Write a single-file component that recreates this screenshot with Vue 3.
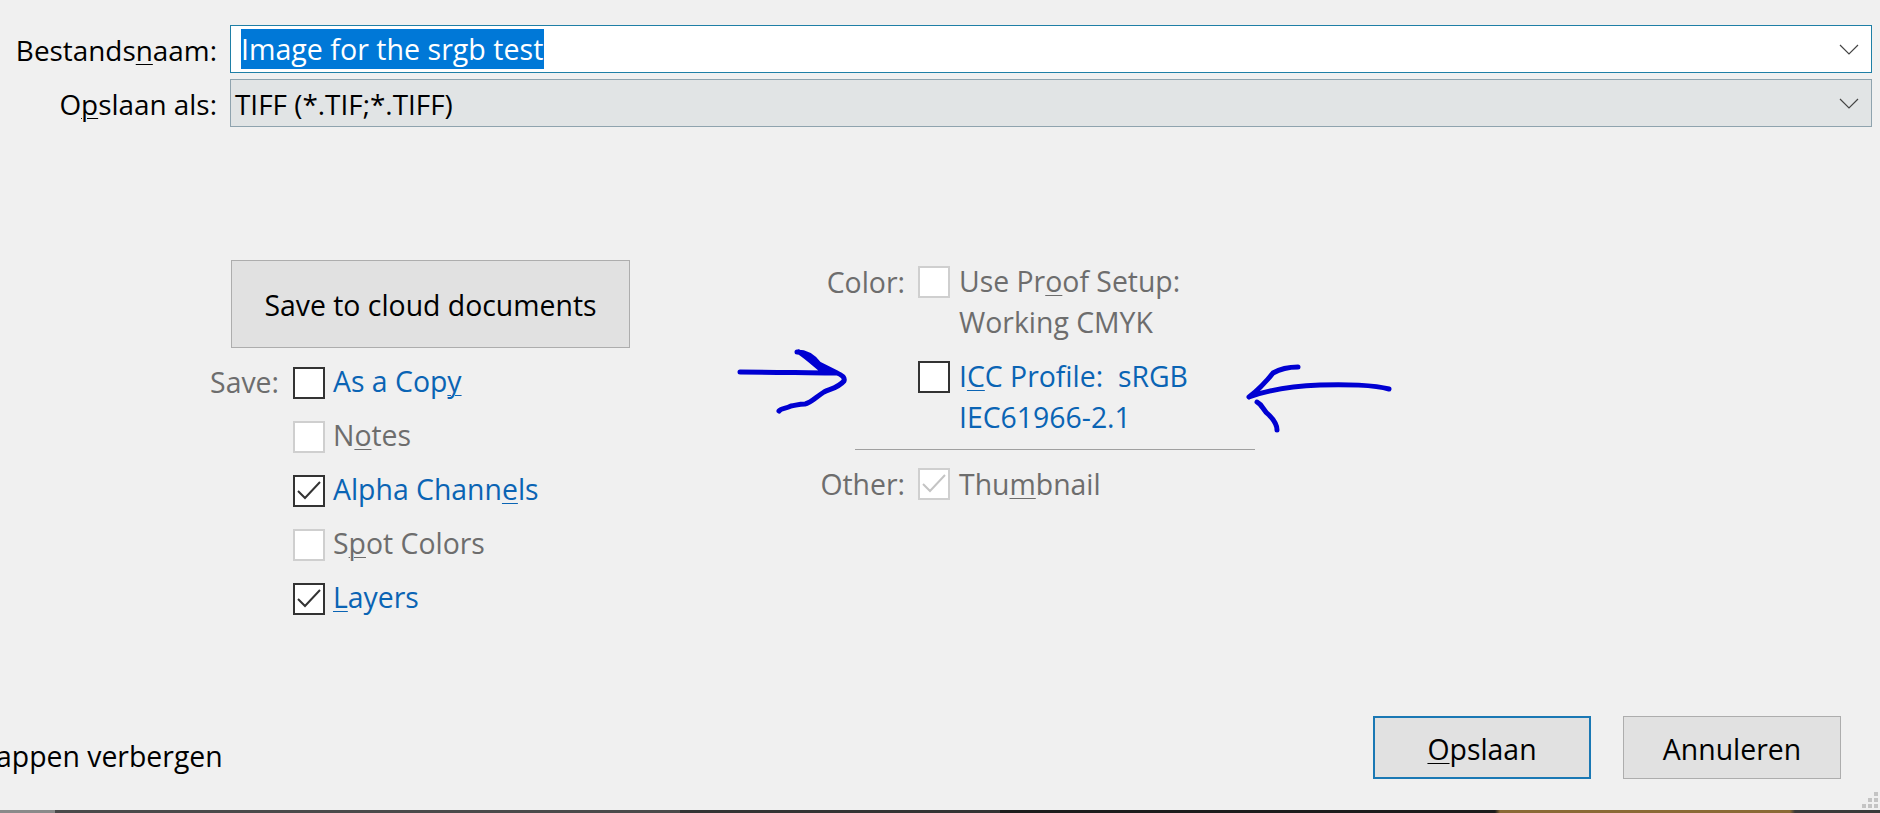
<script setup>
const leftOptions = [
  { before: 'As a Cop', key: 'y', after: '', on: true, checked: false },
  { before: 'N', key: 'o', after: 'tes', on: false, checked: false },
  { before: 'Alpha Chann', key: 'e', after: 'ls', on: true, checked: true },
  { before: 'S', key: 'p', after: 'ot Colors', on: false, checked: false },
  { before: '', key: 'L', after: 'ayers', on: true, checked: true }
]
</script>

<template>
  <div class="dialog">
    <section class="fields">
      <label class="field-label">Bestands<u>n</u>aam:</label>
      <div class="combo combo-edit">
        <span class="selection">Image for the srgb test</span>
        <svg class="chevron" viewBox="0 0 20 11"><path d="M1 1l9 9 9-9" /></svg>
      </div>
      <label class="field-label">O<u>p</u>slaan als:</label>
      <div class="combo combo-select">
        <span class="value">TIFF (*.TIF;*.TIFF)</span>
        <svg class="chevron" viewBox="0 0 20 11"><path d="M1 1l9 9 9-9" /></svg>
      </div>
    </section>

    <section class="options">
      <div class="save-col">
        <button class="btn cloud">Save to cloud documents</button>
        <div class="save-list">
          <div v-for="(o, i) in leftOptions" :key="i" class="opt">
            <span class="opt-label">{{ i === 0 ? 'Save:' : '' }}</span>
            <span class="box" :class="{ off: !o.on }">
              <svg v-if="o.checked" viewBox="0 0 28 28"><path d="M3 14l7 7L25 5" /></svg>
            </span>
            <span class="text" :class="{ link: o.on }">{{ o.before }}<u>{{ o.key }}</u>{{ o.after }}</span>
          </div>
        </div>
      </div>

      <div class="color-col">
        <div class="opt tall">
          <span class="opt-label">Color:</span>
          <span class="box off"></span>
          <span class="text">Use Pr<u>o</u>of Setup:<br />Working CMYK</span>
        </div>
        <div class="opt tall icc">
          <span class="opt-label"></span>
          <span class="box"></span>
          <span class="text link">I<u>C</u>C Profile:&nbsp; sRGB<br />IEC61966-2.1</span>
        </div>
        <hr class="rule" />
        <div class="opt other">
          <span class="opt-label">Other:</span>
          <span class="box off">
            <svg class="faint" viewBox="0 0 28 28"><path d="M3 14l7 7L25 5" /></svg>
          </span>
          <span class="text">Thu<u>m</u>bnail</span>
        </div>
      </div>
    </section>

    <footer class="footer">
      <span class="hide">appen verbergen</span>
      <div class="actions">
        <button class="btn action primary"><u>O</u>pslaan</button>
        <button class="btn action">Annuleren</button>
      </div>
    </footer>

    <div class="taskbar"></div>

    <svg class="grip" viewBox="0 0 18 16">
      <rect x="13" y="0" width="4" height="4" />
      <rect x="7" y="6" width="4" height="4" /><rect x="13" y="6" width="4" height="4" />
      <rect x="1" y="12" width="4" height="4" /><rect x="7" y="12" width="4" height="4" /><rect x="13" y="12" width="4" height="4" />
    </svg>

    <svg class="ink" viewBox="0 0 1880 813">
      <path d="M740 372C775 372 810 373 837 373M797 352C806 352 813 356 819 364L837 373M799 352C808 358 814 364 824 372L837 373C842 375 845 378 844 381C838 388 830 389 824 392C816 397 811 403 805 404C799 404 797 405 791 406C785 409 781 408 779 411" />
      <path d="M1389 389C1375 385 1345 384 1320 385C1296 386 1268 390 1249 397M1298 367C1288 367 1280 369 1273 373C1266 382 1258 390 1249 397M1257 402C1263 405 1263 411 1269 415C1274 420 1277 424 1277 430" />
    </svg>
  </div>
</template>

<style>
html, body { margin: 0; background: #f0f0f0; }
</style>

<style scoped>
.dialog {
  position: relative;
  width: 1880px;
  height: 813px;
  overflow: hidden;
  background: #f0f0f0;
  color: #000;
  font-family: "Open Sans", "Noto Sans", sans-serif;
  font-size: 28.4px;
  box-sizing: border-box;
}
u { text-underline-offset: 3px; text-decoration-thickness: 1px; }
.fields {
  display: grid;
  grid-template-columns: 218px 1fr;
  column-gap: 12px;
  row-gap: 6px;
  padding: 25px 8px 0 0;
  align-items: center;
  font-size: 27.9px;
}
.field-label { text-align: right; line-height: 48px; white-space: nowrap; padding: 1px 1px 0 0; height: 48px; box-sizing: border-box; }
.combo {
  height: 48px;
  box-sizing: border-box;
  display: flex;
  align-items: center;
  justify-content: space-between;
  padding: 0 12px 0 10px;
}
.combo-edit { background: #fff; border: 1px solid #1f7fa6; }
.combo-select { background: #e1e4e5; border: 1px solid #8fa3ae; padding-left: 4px; }
.selection {
  display: block;
  background: #0078d7;
  color: #fff;
  line-height: 40px;
  height: 40px;
  width: 303px;
  font-size: 28.6px;
  white-space: nowrap;
}
.value { white-space: nowrap; padding-top: 2px; }
.chevron { width: 20px; height: 11px; fill: none; stroke: #444; stroke-width: 1.2; }
.options {
  display: flex;
  padding: 133px 0 0 231px;
  height: 589px;
  box-sizing: border-box;
  align-items: flex-start;
}
.save-col { width: 399px; }
.btn {
  font: inherit;
  color: #000;
  background: #e1e1e1;
  border: 1px solid #adadad;
  padding: 2px 0 0;
  box-sizing: border-box;
}
.cloud { display: block; width: 399px; height: 88px; }
.save-list { display: flex; flex-direction: column; gap: 22px; margin: 19px 0 0 -231px; }
.opt { display: flex; align-items: center; height: 32px; }
.opt-label { width: 279px; margin-right: 14px; text-align: right; color: #6d6d6d; flex: none; margin-top: -2px; }
.box {
  flex: none;
  width: 32px;
  height: 32px;
  box-sizing: border-box;
  background: #fff;
  border: 2px solid #333;
  display: block;
}
.box.off { border-color: #cfcfcf; }
.box svg { display: block; width: 28px; height: 28px; fill: none; stroke: #333; stroke-width: 2; }
.box svg.faint { stroke: #c4c4c4; }
.text { margin-left: 8px; margin-top: -4px; color: #6d6d6d; white-space: nowrap; }
.text.link { color: #0a64b4; }
.color-col { margin-left: 121px; width: 400px; padding-top: 6px; display: flex; flex-direction: column; align-items: flex-start; }
.color-col .opt-label { width: 187px; margin-right: 13px; margin-left: -33px; margin-top: 0; }
.color-col .text { margin-left: 9px; }
.color-col .other .text { margin-top: 0; }
.opt.tall { align-items: flex-start; height: auto; line-height: 41px; }
.opt.tall .text { margin-top: -5px; }
.opt.tall .opt-label { line-height: 32px; }
.icc { margin-top: 18px; }
.rule { width: 400px; margin: 11px 0 18px 104px; border: 0; border-top: 1px solid #a0a0a0; }
.footer {
  display: flex;
  justify-content: space-between;
  align-items: center;
  height: 63px;
  padding-right: 39px;
}
.hide { margin-left: -4px; white-space: nowrap; position: relative; top: 8px; width: 226px; overflow: hidden; }
.actions { display: flex; gap: 32px; }
.action { width: 218px; height: 63px; }
.primary { border: 2px solid #1a78b4; }
.taskbar {
  position: absolute;
  left: 0;
  right: 0;
  bottom: 0;
  height: 3px;
  background: linear-gradient(90deg, #8a8a8a 0 55px, #4a4a4a 55px 680px, #333 680px 1000px, #1c1c1c 1000px 1495px, #8a6a35 1500px 1790px, #3a3a3a 1795px);
}
.grip { position: absolute; right: 1px; bottom: 5px; width: 18px; height: 16px; fill: #c4c4c4; }
.ink {
  position: absolute;
  left: 0;
  top: 0;
  width: 1880px;
  height: 813px;
  fill: none;
  stroke: #0000d2;
  stroke-width: 5;
  stroke-linecap: round;
  stroke-linejoin: round;
  pointer-events: none;
}
</style>
